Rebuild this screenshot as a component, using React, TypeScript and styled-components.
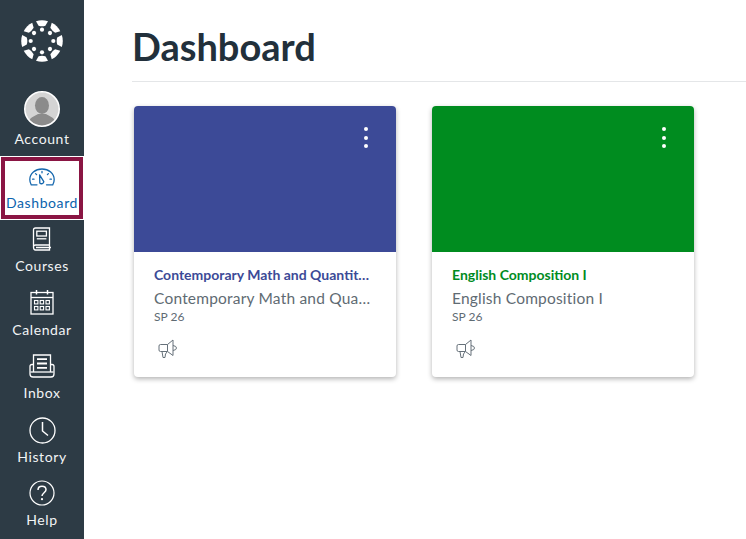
import React from "react";
import styled, { createGlobalStyle } from "styled-components";

const GlobalStyle = createGlobalStyle`
  html, body {
    margin: 0;
    padding: 0;
    height: 100%;
    background: #fff;
    font-family: Lato, "Open Sans", sans-serif;
    overflow: hidden;
  }
`;

const Page = styled.div`
  display: flex;
  width: 746px;
  height: 539px;
  overflow: hidden;
`;

const Sidebar = styled.nav`
  flex: 0 0 84px;
  display: flex;
  flex-direction: column;
  background: #2d3b45;
`;

const LogoWrap = styled.div`
  display: flex;
  justify-content: center;
  padding: 20px 0 0;
  height: 69px;
  box-sizing: border-box;
`;

const NavItem = styled.a<{ $active?: boolean; $h: number }>`
  display: flex;
  flex-direction: column;
  align-items: center;
  justify-content: flex-end;
  height: ${(p) => p.$h}px;
  box-sizing: border-box;
  padding-bottom: 8px;
  font-size: 14px;
  line-height: 18px;
  letter-spacing: 0.6px;
  color: #f2f4f5;
  ${(p) => p.$active && "background: #fff; color: #0a63ad; position: relative;"}
`;

const ActiveFrame = styled.span`
  position: absolute;
  left: 1px;
  top: 1px;
  right: 1px;
  bottom: 1px;
  border: 4px solid #8a1543;
  filter: blur(0.5px);
`;

const NavIcon = styled.span<{ $gap?: number }>`
  display: flex;
  align-items: center;
  justify-content: center;
  height: 38px;
  margin-bottom: ${(p) => p.$gap ?? 0}px;
`;

const Main = styled.main`
  flex: 1;
  min-width: 0;
  padding-left: 48px;
`;

const Title = styled.h1`
  margin: 0;
  height: 82px;
  box-sizing: border-box;
  padding-top: 22px;
  border-bottom: 1px solid #e4e6e8;
  font-size: 38px;
  line-height: 48px;
  font-weight: 700;
  color: #22303b;
`;

const Cards = styled.div`
  display: flex;
  gap: 36px;
  padding: 24px 0 0 2px;
`;

const Card = styled.article`
  width: 262px;
  height: 271px;
  border-radius: 4px;
  background: #fff;
  box-shadow: 0 2px 5px rgba(0, 0, 0, 0.3);
  overflow: hidden;
`;

const Hero = styled.div<{ $color: string }>`
  display: flex;
  justify-content: flex-end;
  height: 146px;
  padding: 21px 28px 0 0;
  box-sizing: border-box;
  background: ${(p) => p.$color};
`;

const Dots = styled.div`
  display: flex;
  flex-direction: column;
  gap: 4.5px;
`;

const Dot = styled.span`
  width: 4px;
  height: 4px;
  border-radius: 50%;
  background: #fff;
`;

const Body = styled.div`
  padding: 14px 20px 0;
`;

const CourseLink = styled.div<{ $color: string }>`
  font-size: 14px;
  line-height: 18px;
  font-weight: 700;
  color: ${(p) => p.$color};
  white-space: nowrap;
  overflow: hidden;
  text-overflow: ellipsis;
`;

const CourseName = styled.div`
  margin-top: 5px;
  font-size: 15.5px;
  line-height: 19px;
  color: #5f6b73;
  letter-spacing: 0.2px;
  white-space: nowrap;
  overflow: hidden;
  text-overflow: ellipsis;
`;

const Term = styled.div`
  margin-top: 2px;
  font-size: 12px;
  line-height: 14px;
  color: #5f6b73;
`;

const Action = styled.div`
  margin: 15px 0 0 4px;
  height: 20px;
  color: #66717a;
`;

const CanvasLogo = () => {
  const segs = [0, 45, 90, 135, 180, 225, 270, 315];
  return (
    <svg width="42" height="42" viewBox="-21 -21 42 42" fill="#fff">
      {segs.map((a) => (
        <g key={a} transform={`rotate(${a})`}>
          <path d="M-6 -19.8 Q0 -21.8 6 -19.8 L3.4 -15.2 Q0 -14.2 -3.4 -15.2 Z" />
          <circle cx="0" cy="-11.3" r="2.1" />
        </g>
      ))}
    </svg>
  );
};

const Avatar = () => (
  <svg width="38" height="38" viewBox="0 0 38 38">
    <defs>
      <clipPath id="av">
        <circle cx="19" cy="19" r="17" />
      </clipPath>
    </defs>
    <circle cx="19" cy="19" r="17" fill="#d4d4d4" />
    <g clipPath="url(#av)" fill="#8b8b8b">
      <ellipse cx="19" cy="15.5" rx="7" ry="8.5" />
      <path d="M3 38 C4 28 12 26 15 24 L23 24 C26 26 34 28 35 38 Z" />
    </g>
    <circle cx="19" cy="19" r="17.2" fill="none" stroke="#fff" strokeWidth="1.6" />
  </svg>
);

const GaugeIcon = () => (
  <svg width="26" height="18" viewBox="0 0 26 18" fill="none" stroke="#1668ae" strokeWidth="1.3">
    <path d="M8 16.8 H2.2 C1.3 15.2 0.8 13.4 0.8 11.6 C0.8 5.6 6.2 1 13 1 C19.8 1 25.2 5.6 25.2 11.6 C25.2 13.4 24.7 15.2 23.8 16.8 H17.5" strokeLinecap="round" />
    <path d="M10.6 6.8 L14.8 13.6 A2.3 2.3 0 0 1 10.8 15 Z" strokeLinejoin="round" />
    <path d="M13 3.4 V4.8 M6.6 5.6 L7.6 6.6 M19.4 5.6 L18.4 6.6 M3.6 11.2 H5 M21 11.2 H22.4" strokeLinecap="round" />
  </svg>
);

const BookIcon = () => (
  <svg width="20" height="24" viewBox="0 0 20 24" fill="none" stroke="#fff" strokeWidth="1.3">
    <path d="M1.5 20 V3 Q1.5 1 3.5 1 H17.5 V18 H3.5 Q1.5 18 1.5 20 Q1.5 23 3.5 23 H17.5 V18" />
    <rect x="4.8" y="4.2" width="9.6" height="4.8" />
    <path d="M4.8 11.8 H14.4" />
    <path d="M4 20.5 H19" strokeWidth="1.5" />
  </svg>
);

const CalendarIcon = () => (
  <svg width="24" height="26" viewBox="0 0 24 26" fill="none" stroke="#fff" strokeWidth="1.3">
    <rect x="1" y="3.5" width="22" height="21.5" />
    <path d="M1 8.5 H23" />
    <path d="M6.5 1 V5.5 M17.5 1 V5.5" strokeWidth="1.5" />
    {[11.5, 17.5].map((y) =>
      [4.5, 10.2, 16].map((x) => <rect key={`${x}${y}`} x={x} y={y} width="3.4" height="3.4" strokeWidth="1.1" />)
    )}
  </svg>
);

const InboxIcon = () => (
  <svg width="26" height="24" viewBox="0 0 26 24" fill="none" stroke="#fff" strokeWidth="1.3">
    <path d="M4.5 18 V1 H21.5 V18" />
    <path d="M8 5.2 H18 M8 9.5 H18 M8 13.8 H18" strokeWidth="1.8" />
    <path d="M4.5 10.5 H3 Q1 10.5 1 12.5 V20 Q1 23 4 23 H22 Q25 23 25 20 V12.5 Q25 10.5 23 10.5 H21.5" />
    <path d="M1.5 18 H24.5" />
  </svg>
);

const ClockIcon = () => (
  <svg width="27" height="27" viewBox="0 0 27 27" fill="none" stroke="#fff" strokeWidth="1.3">
    <circle cx="13.5" cy="13.5" r="12.5" />
    <path d="M13.5 5 V14 L19 18.5" strokeWidth="1.5" />
  </svg>
);

const HelpIcon = () => (
  <svg width="26" height="26" viewBox="0 0 26 26" fill="none" stroke="#fff" strokeWidth="1.2">
    <circle cx="13" cy="13" r="12" />
    <path d="M9 10 C9 7.5 11 6.3 13 6.3 C15.3 6.3 17 7.8 17 9.8 C17 12.6 13 13 13 16" strokeWidth="1.5" />
    <circle cx="13" cy="19.2" r="1.1" fill="#fff" stroke="none" />
  </svg>
);

const Megaphone = () => (
  <svg width="20" height="19" viewBox="0 0 20 19" fill="none" stroke="currentColor" strokeWidth="1">
    <path d="M2.5 5.5 H9.5 L15 1 V16.5 L9.5 12.5 H2.5 Q1 12.5 1 11 V7 Q1 5.5 2.5 5.5 Z" strokeLinejoin="round" />
    <path d="M9.5 5.5 V12.5" />
    <path d="M15 6.5 Q18.5 7 18.5 9 Q18.5 11 15 11.5" />
    <path d="M4 12.5 L5 18.5 H7 L7.5 15 L9 13" strokeLinejoin="round" />
  </svg>
);

const navItems = [
  { label: "Courses", icon: <BookIcon />, h: 63, gap: 0 },
  { label: "Calendar", icon: <CalendarIcon />, h: 64, gap: 0 },
  { label: "Inbox", icon: <InboxIcon />, h: 63, gap: 0 },
  { label: "History", icon: <ClockIcon />, h: 64, gap: -1 },
  { label: "Help", icon: <HelpIcon />, h: 63, gap: -1 },
];

const courses = [
  { color: "#3c4a97", link: "Contemporary Math and Quantitative Reasoning", name: "Contemporary Math and Quantitative Reasoning" },
  { color: "#008c1f", link: "English Composition I", name: "English Composition I" },
];

export default function App() {
  return (
    <>
      <GlobalStyle />
      <Page>
        <Sidebar>
          <LogoWrap>
            <CanvasLogo />
          </LogoWrap>
          <NavItem $h={87}>
            <NavIcon $gap={2}>
              <Avatar />
            </NavIcon>
            Account
          </NavItem>
          <NavItem $h={64} $active>
            <ActiveFrame />
            <NavIcon $gap={-2}>
              <GaugeIcon />
            </NavIcon>
            Dashboard
          </NavItem>
          {navItems.map((item) => (
            <NavItem key={item.label} $h={item.h}>
              <NavIcon $gap={item.gap}>{item.icon}</NavIcon>
              {item.label}
            </NavItem>
          ))}
        </Sidebar>
        <Main>
          <Title>Dashboard</Title>
          <Cards>
            {courses.map((c) => (
              <Card key={c.link}>
                <Hero $color={c.color}>
                  <Dots>
                    <Dot />
                    <Dot />
                    <Dot />
                  </Dots>
                </Hero>
                <Body>
                  <CourseLink $color={c.color}>{c.link}</CourseLink>
                  <CourseName>{c.name}</CourseName>
                  <Term>SP 26</Term>
                  <Action>
                    <Megaphone />
                  </Action>
                </Body>
              </Card>
            ))}
          </Cards>
        </Main>
      </Page>
    </>
  );
}
